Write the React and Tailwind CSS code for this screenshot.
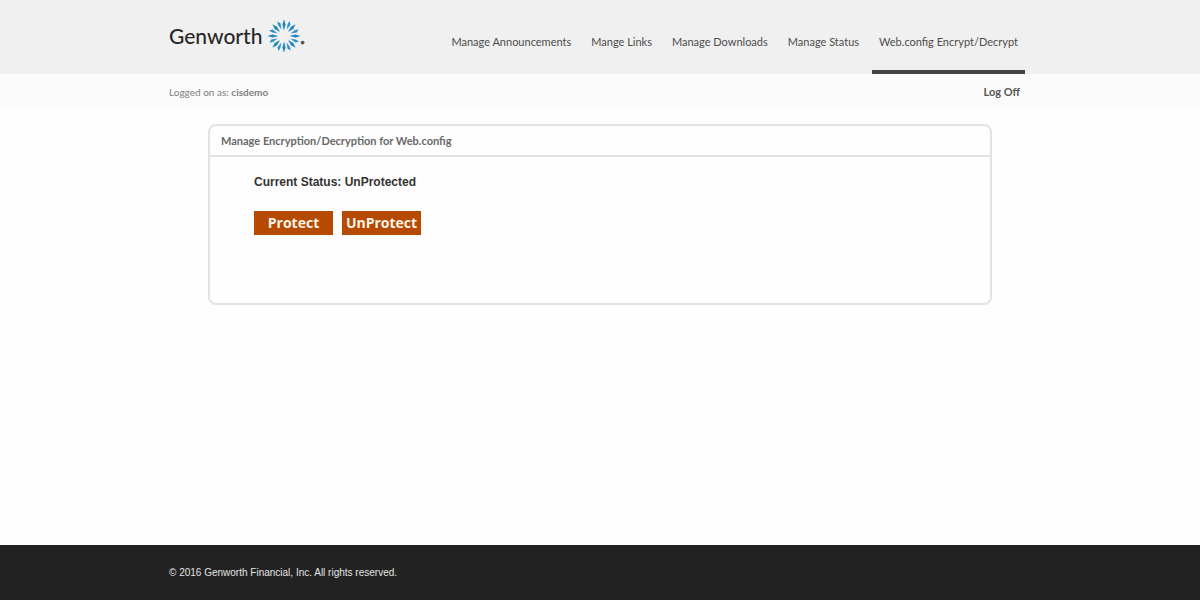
const links = [
  'Manage Announcements',
  'Mange Links',
  'Manage Downloads',
  'Manage Status',
  'Web.config Encrypt/Decrypt',
];

const angles = [0, 45, 90, 135, 180, 225, 270, 315];

function Logo() {
  return (
    <a href="#" aria-label="Genworth home" className="flex items-center text-[#2a2728]">
      <span className="w-[98px] font-['Lato',sans-serif] text-[21px] leading-8 font-medium">Genworth</span>
      <svg viewBox="-17 -17 38 34" className="h-[34px] w-[38px]" aria-hidden="true">
        {angles.map((a) => (
          <g key={a} transform={`rotate(${a})`}>
            <path d="M0 -16.5 L1.6 -11.5 L0 -5.6 L-1.6 -11.5 Z" fill="#1f86bd" />
            <path d="M-0.8 -16 L1.6 -13.2 L0.2 -7 L-1.2 -12 Z" fill="#2b90c4" transform="rotate(22.5)" />
          </g>
        ))}
        <circle cx="18.6" cy="6.6" r="1.9" fill="#555" />
      </svg>
    </a>
  );
}

export default function App() {
  return (
    <div className="flex min-h-screen flex-col bg-[#fefefe] font-['Lato',sans-serif]">
      <header className="bg-[#f0f0f0]">
        <div className="mx-auto flex h-[74px] w-full max-w-[862px] items-stretch justify-between pr-1.5">
          <div className="flex items-start pt-[19px]">
            <Logo />
          </div>
          <nav className="flex gap-1.5 text-[11px] leading-5 text-[#4c4c4c]">
            {links.map((label, i) => (
              <a
                key={label}
                href="#"
                aria-current={i === 4 ? 'page' : undefined}
                className={
                  'border-b-4 px-[7px] pt-8 whitespace-nowrap ' +
                  (i === 4 ? 'border-[#444]' : 'border-transparent')
                }
              >
                {label}
              </a>
            ))}
          </nav>
        </div>
      </header>
      <div className="bg-[#fbfbfb]">
        <div className="mx-auto flex h-[34px] w-full max-w-[862px] items-center justify-between pt-0.5 pr-[11px]">
          <p className="text-[10px] leading-5 text-[#808080]">
            Logged on as: <b>cisdemo</b>
          </p>
          <a href="#" className="text-[11px] leading-5 font-bold text-[#555]">
            Log Off
          </a>
        </div>
      </div>
      <main className="flex-1 pt-4">
        <section className="mx-auto min-h-[181px] w-full max-w-[784px] rounded-lg border-2 border-[#e3e3e3]">
          <h1 className="border-b-2 border-[#e3e3e3] px-[11px] py-[5px] text-[11px] leading-[19px] font-bold text-[#686868]">
            Manage Encryption/Decryption for Web.config
          </h1>
          <div className="px-11 pt-[15px]">
            <p className="font-['Liberation_Sans',sans-serif] text-[12px] leading-5 font-bold text-[#333]">
              Current Status: UnProtected
            </p>
            <div className="mt-[19px] flex gap-[9px] font-['Open_Sans',sans-serif] text-[14px] leading-6 font-bold text-[#fdf3ea]">
              <button type="button" className="w-[79px] bg-[#b54a00] whitespace-nowrap">
                Protect
              </button>
              <button type="button" className="w-[79px] bg-[#b54a00] whitespace-nowrap">
                UnProtect
              </button>
            </div>
          </div>
        </section>
      </main>
      <footer className="bg-[#222]">
        <p className="mx-auto h-[55px] w-full max-w-[862px] pt-[18px] font-['Liberation_Sans',sans-serif] text-[10px] leading-5 text-[#e4e4e4]">
          © 2016 Genworth Financial, Inc. All rights reserved.
        </p>
      </footer>
    </div>
  );
}
